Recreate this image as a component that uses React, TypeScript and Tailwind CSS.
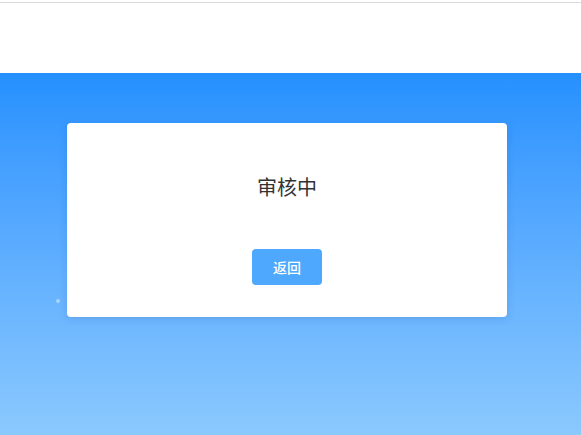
import React from 'react';

export default function App() {
    return (
        <div className="h-screen w-full flex flex-col bg-white font-['Noto_Sans_CJK_SC',sans-serif] overflow-hidden">
            {/* Header */}
            <div className="h-[73px] flex-none bg-white">
                <div className="h-[2px]"></div>
                <div className="h-px bg-[#dcdcdc]"></div>
            </div>

            {/* Body */}
            <div className="relative flex-1 bg-gradient-to-b from-[#2490fe] to-[#8bc9fe]">
                <span className="absolute left-[56px] top-[226px] w-[4px] h-[4px] rounded-full bg-[#a9d4ff]"></span>

                <div className="ml-[67px] mt-[50px] w-[440px] h-[194px] bg-white rounded-[4px] shadow-[0_2px_8px_rgba(0,60,140,0.15)] flex flex-col items-center">
                    <h2 className="mt-[52px] text-[20px] leading-[24px] text-[#333333] font-normal">
                        审核中
                    </h2>
                    <button className="mt-[50px] w-[70px] h-[36px] rounded-[4px] bg-[#4da8fe] text-white text-[14px] font-medium leading-none">
                        返回
                    </button>
                </div>
            </div>
        </div>
    );
}
